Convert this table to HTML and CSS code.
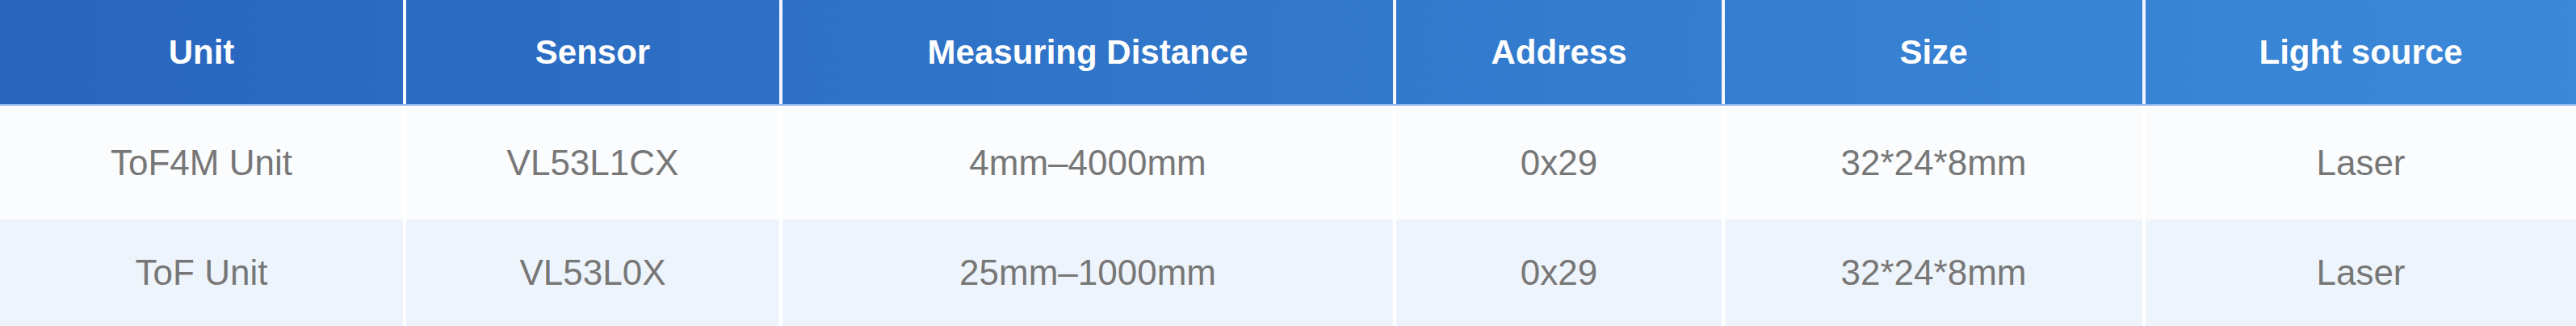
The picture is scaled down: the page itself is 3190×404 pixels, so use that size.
FILE: index.html
```html
<!DOCTYPE html>
<html lang="en">
<head>
<meta charset="utf-8">
<title>ToF Units</title>
<link rel="stylesheet" href="styles.css">
</head>
<body>
<div class="table">
  <div class="row head">
    <div class="cell">Unit</div>
    <div class="cell">Sensor</div>
    <div class="cell">Measuring Distance</div>
    <div class="cell">Address</div>
    <div class="cell">Size</div>
    <div class="cell">Light source</div>
  </div>
  <div class="row odd">
    <div class="cell">ToF4M Unit</div>
    <div class="cell">VL53L1CX</div>
    <div class="cell">4mm–4000mm</div>
    <div class="cell">0x29</div>
    <div class="cell">32*24*8mm</div>
    <div class="cell">Laser</div>
  </div>
  <div class="row even">
    <div class="cell">ToF Unit</div>
    <div class="cell">VL53L0X</div>
    <div class="cell">25mm–1000mm</div>
    <div class="cell">0x29</div>
    <div class="cell">32*24*8mm</div>
    <div class="cell">Laser</div>
  </div>
</div>
</body>
</html>
```

FILE: styles.css
```css
html, body {
  margin: 0;
  padding: 0;
  background: #ffffff;
}

.table {
  width: 3190px;
  font-family: "Liberation Sans", Arial, sans-serif;
}

.row {
  display: grid;
  grid-template-columns: 499px 466px 760px 407px 521px 537px;
}

.cell {
  box-sizing: border-box;
  display: flex;
  align-items: center;
  justify-content: center;
  white-space: nowrap;
}

.cell + .cell {
  border-left: 4px solid #ffffff;
}

.head {
  height: 131px;
  background: linear-gradient(90deg, #2865be 0%, #2f74c8 40%, #3681d2 75%, #3b87d8 100%);
  border-bottom: 2px solid #8fb8ec;
  box-sizing: border-box;
  color: #ffffff;
  font-weight: bold;
  font-size: 42px;
}

.head .cell + .cell {
  border-left-color: #f4f8fe;
}

.odd {
  height: 141px;
  background: #fafcfe;
  color: #777777;
  font-size: 44px;
}

.even {
  height: 132px;
  background: #eef4fb;
  color: #777777;
  font-size: 44px;
}
```
